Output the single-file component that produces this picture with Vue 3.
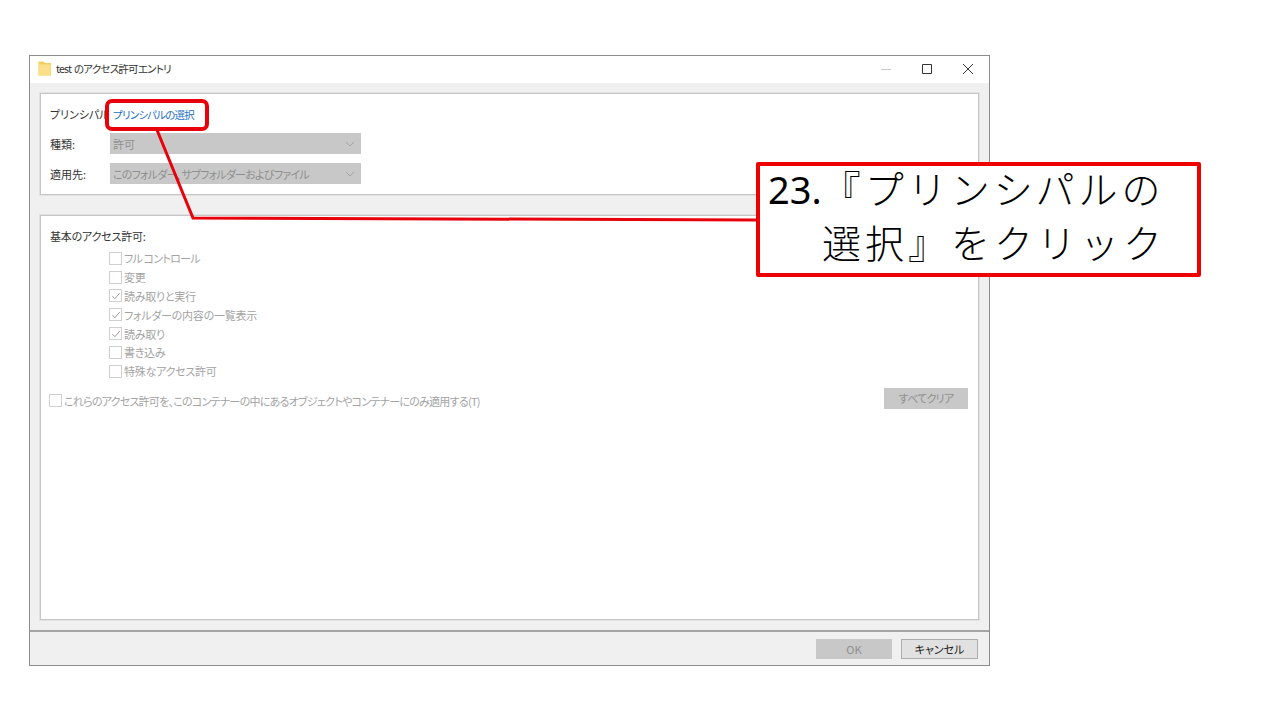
<template>
  <div class="page">
    <div class="window">
      <div class="titlebar">
        <svg class="folder" width="13" height="15" viewBox="0 0 13 15">
          <path d="M0.5 0.5h5l1.5 1.5h6v12.5H0.5z" fill="#f3cf62" />
          <path d="M0.5 3.5h12v11H0.5z" fill="#fbe08c" />
        </svg>
        <span class="title">test のアクセス許可エントリ</span>
        <div class="controls">
          <svg width="12" height="12" viewBox="0 0 12 12"><path d="M1 6.5h10" stroke="#c9c9c9" fill="none" /></svg>
          <svg width="12" height="12" viewBox="0 0 12 12"><path d="M1.5 1.5h9v9h-9z" stroke="#333" fill="none" /></svg>
          <svg width="12" height="12" viewBox="0 0 12 12"><path d="M1 1l10 10M11 1L1 11" stroke="#333" fill="none" /></svg>
        </div>
      </div>

      <div class="body">
        <section class="panel top">
          <div class="row principal">
            <span class="label dark">プリンシパル</span>
            <a class="link">プリンシパルの選択</a>
          </div>
          <div class="row">
            <span class="label dark">種類:</span>
            <div class="select">
              <span>許可</span>
              <svg width="10" height="6" viewBox="0 0 10 6"><path d="M1 1l4 4 4-4" stroke="#a6a6a6" fill="none" /></svg>
            </div>
          </div>
          <div class="row">
            <span class="label dark">適用先:</span>
            <div class="select">
              <span class="tight">このフォルダー、サブフォルダーおよびファイル</span>
              <svg width="10" height="6" viewBox="0 0 10 6"><path d="M1 1l4 4 4-4" stroke="#a6a6a6" fill="none" /></svg>
            </div>
          </div>
        </section>

        <section class="panel main">
          <div class="heading dark">基本のアクセス許可:</div>
          <ul class="perms">
            <li v-for="p in perms" :key="p.name">
              <span class="check">
                <svg v-if="p.on" width="10" height="10" viewBox="0 0 10 10"><path d="M1.5 5.2l2.4 2.5 4.8-5.6" stroke="#9a9a9a" fill="none" /></svg>
              </span>
              <span :class="{ tight: p.tight }">{{ p.name }}</span>
            </li>
          </ul>
          <div class="apply">
            <label class="apply-label">
              <span class="check"></span>
              <span class="tight">これらのアクセス許可を、このコンテナーの中にあるオブジェクトやコンテナーにのみ適用する(T)</span>
            </label>
            <div class="btn disabled clear"><span class="tight">すべてクリア</span></div>
          </div>
        </section>
      </div>

      <div class="footer">
        <div class="btn disabled ok">OK</div>
        <div class="btn cancel">キャンセル</div>
      </div>
    </div>

    <!-- annotation drawn over the dialog -->
    <svg class="leader" width="1280" height="720" viewBox="0 0 1280 720">
      <path d="M157 130L193 218L756 220" fill="none" stroke="#e8000b" stroke-width="3" />
    </svg>
    <div class="highlight"></div>
    <div class="callout">
      <div class="lines">
        <div><span class="num">23.</span>『プリンシパルの</div>
        <div class="indent">選択』をクリック</div>
      </div>
    </div>
  </div>
</template>

<script setup>
const perms = [
  { name: 'フル コントロール', on: false, tight: true },
  { name: '変更', on: false },
  { name: '読み取りと実行', on: true },
  { name: 'フォルダーの内容の一覧表示', on: true },
  { name: '読み取り', on: true },
  { name: '書き込み', on: false },
  { name: '特殊なアクセス許可', on: false },
]
</script>

<style>
html,
body {
  background: #fff;
}
</style>

<style scoped>
.page {
  position: relative;
  width: 1280px;
  height: 720px;
  padding: 55px 0 0 29px;
  box-sizing: border-box;
  overflow: hidden;
  font-family: 'Noto Sans CJK JP', 'Liberation Sans', sans-serif;
  font-size: 11px;
  font-feature-settings: 'palt';
  color: #a3a3a3;
}

.window {
  width: 961px;
  height: 611px;
  box-sizing: border-box;
  border: 1px solid #8c8c8c;
  background: #f0f0f0;
  display: flex;
  flex-direction: column;
}

.titlebar {
  height: 27px;
  flex: none;
  box-sizing: border-box;
  background: #fff;
  display: flex;
  align-items: center;
  padding: 0 0 2px 8px;
}

.folder {
  margin-right: 5px;
}

.title {
  color: #333;
  font-size: 10.5px;
  letter-spacing: -0.75px;
  word-spacing: 1px;
}

.controls {
  margin-left: auto;
  display: flex;
  gap: 29px;
  padding-right: 15px;
}

.body {
  flex: 1;
  padding: 10px;
  display: flex;
  flex-direction: column;
  gap: 20px;
  min-height: 0;
}

.panel {
  background: #fff;
  border: 1px solid #c6c6c6;
  box-shadow: 0 0 0 1px #e2e2e2;
  box-sizing: border-box;
}

.top {
  height: 102px;
  padding: 9px 0 0 9px;
}

.main {
  flex: 1;
  padding: 11px 10px 0 8px;
}

.row {
  display: flex;
  align-items: center;
  height: 21px;
  margin-top: 9px;
}

.principal {
  height: 22px;
  margin-top: 0;
  margin-bottom: -1px;
}

.label {
  width: 60px;
  flex: none;
  white-space: nowrap;
}

.principal .label {
  width: 63px;
}

.dark {
  color: #333;
}

.link {
  color: #1c6fc4;
  font-size: 10.5px;
  letter-spacing: -0.75px;
}

.tight {
  letter-spacing: -0.75px;
}

.select {
  width: 251px;
  height: 21px;
  box-sizing: border-box;
  background: #c8c8c8;
  padding: 0 6px 0 3px;
  display: flex;
  align-items: center;
  justify-content: space-between;
  color: #8f8f8f;
}

.heading {
  padding-left: 1px;
  height: 19px;
  line-height: 19px;
  letter-spacing: -0.2px;
}

.perms {
  list-style: none;
  margin: 3px 0 0 60px;
  padding: 0;
  letter-spacing: -0.25px;
}

.perms li {
  display: flex;
  align-items: center;
  gap: 2px;
  height: 18.8px;
}

.check {
  width: 11px;
  height: 11px;
  flex: none;
  background: #fff;
  border: 1px solid #cfcfcf;
  display: flex;
  align-items: center;
  justify-content: center;
}

.apply {
  display: flex;
  align-items: flex-start;
  justify-content: space-between;
  margin-top: 7px;
}

.apply-label {
  display: flex;
  align-items: center;
  gap: 2px;
  padding-top: 5px;
}

.btn {
  height: 20px;
  box-sizing: border-box;
  display: flex;
  align-items: center;
  justify-content: center;
  padding-bottom: 1px;
}

.disabled {
  background: #c8c8c8;
  color: #8f8f8f;
}

.clear {
  width: 84px;
  height: 21px;
}

.footer {
  height: 35px;
  flex: none;
  box-sizing: border-box;
  border-top: 2px solid #a5a5a5;
  display: flex;
  justify-content: flex-end;
  align-items: flex-start;
  gap: 9px;
  padding: 7px 11px 0 0;
}

.ok {
  width: 76px;
}

.cancel {
  width: 77px;
  background: #e1e1e1;
  border: 1px solid #adadad;
  color: #222;
}

.leader {
  position: absolute;
  left: 0;
  top: 0;
  pointer-events: none;
}

.highlight {
  position: absolute;
  left: 105px;
  top: 99px;
  width: 104px;
  height: 32px;
  box-sizing: border-box;
  border: 4px solid #e8000b;
  border-radius: 7px;
}

.callout {
  position: absolute;
  left: 756px;
  top: 162px;
  width: 445px;
  height: 115px;
  box-sizing: border-box;
  border: 4px solid #ee0000;
  border-radius: 2px;
  background: #fff;
  padding: 0 0 0 8px;
  font-size: 39px;
  line-height: 52px;
  font-feature-settings: normal;
  font-family: 'Noto Sans CJK JP', sans-serif;
  font-weight: 300;
  letter-spacing: 4px;
  color: #000;
  white-space: nowrap;
}

.lines {
  margin-top: -5px;
}

.num {
  font-family: 'Noto Sans', sans-serif;
  font-weight: 400;
  letter-spacing: 0;
  font-size: 38px;
}

.indent {
  padding-left: 54px;
}
</style>
